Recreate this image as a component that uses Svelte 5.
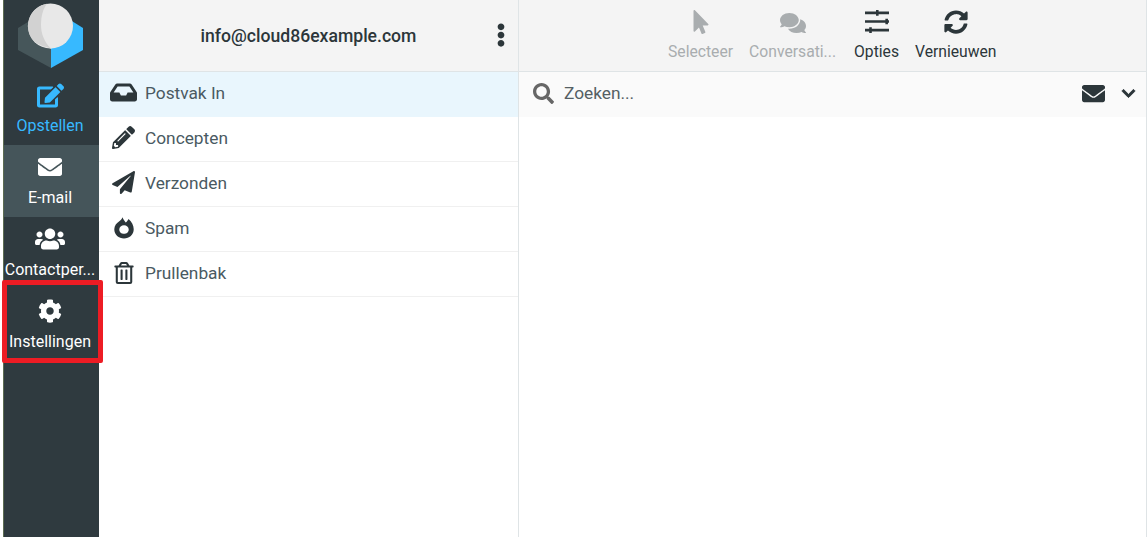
<script lang="ts">
    const icons: Record<string, { box: string; d: string }> = {
        edit: { box: "0 0 576 512", d: "M402.6 83.2l90.2 90.2c3.8 3.8 3.8 10 0 13.8L274.4 405.6l-92.8 10.3c-12.4 1.4-22.9-9.1-21.5-21.5l10.3-92.8L388.8 83.2c3.8-3.8 10-3.8 13.8 0zm162-22.9l-48.8-48.8c-15.2-15.2-39.9-15.2-55.2 0l-35.4 35.4c-3.8 3.8-3.8 10 0 13.8l90.2 90.2c3.8 3.8 10 3.8 13.8 0l35.4-35.4c15.2-15.3 15.2-40 0-55.2zM384 346.2V448H64V128h229.8c3.2 0 6.2-1.3 8.5-3.5l40-40c7.6-7.6 2.2-20.5-8.5-20.5H48C21.5 64 0 85.5 0 112v352c0 26.5 21.5 48 48 48h352c26.5 0 48-21.5 48-48V306.2c0-10.7-12.9-16-20.5-8.5l-40 40c-2.2 2.3-3.5 5.3-3.5 8.5z" },
        envelope: { box: "0 0 512 512", d: "M502.3 190.8c3.9-3.1 9.7-.2 9.7 4.7V400c0 26.5-21.5 48-48 48H48c-26.5 0-48-21.5-48-48V195.6c0-5 5.7-7.8 9.7-4.7 22.4 17.4 52.1 39.5 154.1 113.6 21.1 15.4 56.7 47.8 92.2 47.6 35.7.3 72-32.8 92.3-47.6 102-74.1 131.6-96.3 154-113.7zM256 320c23.2.4 56.6-29.2 73.4-41.4 132.7-96.3 142.8-104.7 173.4-128.7 5.8-4.5 9.2-11.5 9.2-18.9v-19c0-26.5-21.5-48-48-48H48C21.5 64 0 85.5 0 112v19c0 7.4 3.4 14.3 9.2 18.9 30.6 23.9 40.7 32.4 173.4 128.7 16.8 12.2 50.2 41.8 73.4 41.4z" },
        users: { box: "0 0 640 512", d: "M96 224c35.3 0 64-28.7 64-64s-28.7-64-64-64-64 28.7-64 64 28.7 64 64 64zm448 0c35.3 0 64-28.7 64-64s-28.7-64-64-64-64 28.7-64 64 28.7 64 64 64zm32 32h-64c-17.6 0-33.5 7.1-45.1 18.6 40.3 22.1 68.9 62 75.1 109.4h66c17.7 0 32-14.3 32-32v-32c0-35.3-28.7-64-64-64zm-256 0c61.9 0 112-50.1 112-112S381.9 32 320 32 208 82.1 208 144s50.1 112 112 112zm76.8 32h-8.3c-20.8 10-43.9 16-68.5 16s-47.6-6-68.5-16h-8.3C179.6 288 128 339.6 128 403.2V432c0 26.5 21.5 48 48 48h288c26.5 0 48-21.5 48-48v-28.8c0-63.6-51.6-115.2-115.2-115.2zm-223.7-13.4C161.5 263.1 145.6 256 128 256H64c-35.3 0-64 28.7-64 64v32c0 17.7 14.3 32 32 32h65.9c6.3-47.4 34.9-87.3 75.2-109.4z" },
        cog: { box: "0 0 512 512", d: "M487.4 315.7l-42.6-24.6c4.3-23.2 4.3-47 0-70.2l42.6-24.6c4.9-2.8 7.1-8.6 5.5-14-11.1-35.6-30-67.8-54.7-94.6-3.8-4.1-10-5.1-14.8-2.3L380.8 110c-17.9-15.4-38.5-27.3-60.8-35.1V25.8c0-5.6-3.9-10.5-9.4-11.7-36.7-8.2-74.3-7.8-109.2 0-5.5 1.2-9.4 6.1-9.4 11.7V75c-22.2 7.9-42.8 19.8-60.8 35.1L88.7 85.5c-4.9-2.8-11-1.9-14.8 2.3-24.7 26.7-43.6 58.9-54.7 94.6-1.7 5.4.6 11.2 5.5 14L67.3 221c-4.3 23.2-4.3 47 0 70.2l-42.6 24.6c-4.9 2.8-7.1 8.6-5.5 14 11.1 35.6 30 67.8 54.7 94.6 3.8 4.1 10 5.1 14.8 2.3l42.6-24.6c17.9 15.4 38.5 27.3 60.8 35.1v49.2c0 5.6 3.9 10.5 9.4 11.7 36.7 8.2 74.3 7.8 109.2 0 5.5-1.2 9.4-6.1 9.4-11.7v-49.2c22.2-7.9 42.8-19.8 60.8-35.1l42.6 24.6c4.9 2.8 11 1.9 14.8-2.3 24.7-26.7 43.6-58.9 54.7-94.6 1.5-5.5-.7-11.3-5.6-14.1zM256 336c-44.1 0-80-35.9-80-80s35.9-80 80-80 80 35.9 80 80-35.9 80-80 80z" },
        inbox: { box: "0 0 576 512", d: "M567.938 243.908L462.25 85.374A48.003 48.003 0 0 0 422.311 64H153.689a48 48 0 0 0-39.938 21.374L8.062 243.908A47.994 47.994 0 0 0 0 270.533V400c0 26.51 21.49 48 48 48h480c26.51 0 48-21.49 48-48V270.533a47.994 47.994 0 0 0-8.062-26.625zM162.252 128h251.497l85.333 128H376l-32 64H232l-32-64H76.918l85.334-128z" },
        pencil: { box: "0 0 512 512", d: "M497.9 142.1l-46.1 46.1c-4.7 4.7-12.3 4.7-17 0l-111-111c-4.7-4.7-4.7-12.3 0-17l46.1-46.1c18.7-18.7 49.1-18.7 67.9 0l60.1 60.1c18.8 18.7 18.8 49.1 0 67.9zM284.2 99.8L21.6 362.4.4 483.9c-2.9 16.4 11.4 30.6 27.8 27.8l121.5-21.3 262.6-262.6c4.7-4.7 4.7-12.3 0-17l-111-111c-4.8-4.7-12.4-4.7-17.1 0zM124.1 339.9c-5.5-5.5-5.5-14.3 0-19.8l154-154c5.5-5.5 14.3-5.5 19.8 0s5.5 14.3 0 19.8l-154 154c-5.5 5.5-14.3 5.5-19.8 0zM88 424h48v36.3l-64.5 11.3-31.1-31.1L51.7 376H88v48z" },
        plane: { box: "0 0 512 512", d: "M476 3.2L12.5 270.6c-18.1 10.4-15.8 35.6 2.2 43.2L121 358.4l287.3-253.2c5.5-4.9 13.3 2.6 8.6 8.3L176 407v80.5c0 23.6 28.5 32.9 42.5 15.8L282 426l124.6 52.2c14.2 6 30.4-2.9 33-18.2l72-432C515 7.8 493.3-6.8 476 3.2z" },
        fire: { box: "0 0 512 512", d: "M222 6C236 56 268 92 296 128C318 110 346 78 362 44C438 110 482 196 482 285C482 410 380 500 256 500C132 500 30 410 30 285C30 196 88 138 132 108C172 80 208 50 222 6ZM256 190C196 190 146 232 146 290C146 348 196 392 256 392C316 392 366 348 366 290C366 232 316 190 256 190Z" },
        trash: { box: "0 0 448 512", d: "M268 416h24a12 12 0 0 0 12-12V188a12 12 0 0 0-12-12h-24a12 12 0 0 0-12 12v216a12 12 0 0 0 12 12zM432 80h-82.4l-34-56.7A48 48 0 0 0 274.4 0H173.6a48 48 0 0 0-41.2 23.3L98.4 80H16A16 16 0 0 0 0 96v16a16 16 0 0 0 16 16h16v336a48 48 0 0 0 48 48h288a48 48 0 0 0 48-48V128h16a16 16 0 0 0 16-16V96a16 16 0 0 0-16-16zM171.8 50.9A6 6 0 0 1 177 48h94a6 6 0 0 1 5.2 2.9L293.6 80H154.4zM368 464H80V128h288zm-212-48h24a12 12 0 0 0 12-12V188a12 12 0 0 0-12-12h-24a12 12 0 0 0-12 12v216a12 12 0 0 0 12 12z" },
        pointer: { box: "0 0 320 512", d: "M302.189 329.126H196.105l55.831 135.993c3.889 9.428-.555 19.999-9.444 23.999l-49.165 21.427c-9.165 4-19.443-.571-23.332-9.714l-53.053-129.136-86.664 89.138C18.729 472.71 0 463.554 0 447.977V18.299C0 1.899 19.921-6.096 30.277 5.443l284.412 292.542c11.472 11.179 3.007 31.141-12.5 31.141z" },
        comments: { box: "0 0 576 512", d: "M416 192c0-88.4-93.1-160-208-160S0 103.6 0 192c0 34.3 14.1 65.9 38 92-13.4 30.2-35.5 54.2-35.8 54.5-2.2 2.3-2.8 5.7-1.5 8.7S4.8 352 8 352c36.6 0 66.9-12.3 88.7-25 32.2 15.7 70.3 25 111.3 25 114.9 0 208-71.6 208-160zm122 220c23.9-26 38-57.7 38-92 0-66.9-53.5-124.2-129.3-148.1.9 6.6 1.3 13.3 1.3 20.1 0 105.9-107.7 192-240 192-10.8 0-21.3-.8-31.7-1.9C207.8 439.6 281.8 480 368 480c41 0 79.1-9.2 111.3-25 21.8 12.7 52.1 25 88.7 25 3.2 0 6.1-1.9 7.3-4.8 1.3-2.9.7-6.3-1.5-8.7-.3-.3-22.4-24.2-35.8-54.5z" },
        sliders: { box: "0 0 512 512", d: "M0 34h235V0h55v34h222v54H290v34h-55V88H0zM0 218h435v-34h55v34h22v54h-22v34h-55v-34H0zM0 402h90v-34h55v34h367v54H145v34H90v-34H0z" },
        sync: { box: "0 0 512 512", d: "M370.72 133.28C339.458 104.008 298.888 87.962 255.848 88c-77.458.068-144.328 53.178-162.791 126.85-1.344 5.363-6.122 9.15-11.651 9.15H24.103c-7.498 0-13.194-6.807-11.807-14.176C33.933 94.924 134.813 8 256 8c66.448 0 126.791 26.136 171.315 68.685L463.03 40.97C478.149 25.851 504 36.559 504 57.941V192c0 13.255-10.745 24-24 24H345.941c-21.382 0-32.09-25.851-16.971-40.971l41.75-41.749zM32 296h134.059c21.382 0 32.09 25.851 16.971 40.971l-41.75 41.75c31.262 29.273 71.835 45.319 114.876 45.28 77.418-.07 144.315-53.144 162.787-126.849 1.344-5.363 6.122-9.15 11.651-9.15h57.304c7.498 0 13.194 6.807 11.807 14.176C478.067 417.076 377.187 504 256 504c-66.448 0-126.791-26.136-171.315-68.685L48.97 471.03C33.851 486.149 8 475.441 8 454.059V320c0-13.255 10.745-24 24-24z" },
        search: { box: "0 0 512 512", d: "M505 442.7L405.3 343c-4.5-4.5-10.6-7-17-7H372c27.6-35.3 44-79.7 44-128C416 93.1 322.9 0 208 0S0 93.1 0 208s93.1 208 208 208c48.3 0 92.7-16.4 128-44v16.3c0 6.4 2.5 12.5 7 17l99.7 99.7c9.4 9.4 24.6 9.4 33.9 0l28.3-28.3c9.4-9.4 9.4-24.6.1-34zM208 336c-70.7 0-128-57.2-128-128 0-70.7 57.2-128 128-128 70.7 0 128 57.2 128 128 0 70.7-57.2 128-128 128z" },
        chevron: { box: "0 0 448 512", d: "M207.029 381.476L12.686 187.132c-9.373-9.373-9.373-24.569 0-33.941l22.667-22.667c9.357-9.357 24.522-9.375 33.901-.04L224 284.505l154.745-154.021c9.379-9.335 24.544-9.317 33.901.04l22.667 22.667c9.373 9.373 9.373 24.569 0 33.941L240.971 381.476c-9.373 9.372-24.569 9.372-33.942 0z" },
        dots: { box: "0 0 192 512", d: "M96 184c39.8 0 72 32.2 72 72s-32.2 72-72 72-72-32.2-72-72 32.2-72 72-72zM24 80c0 39.8 32.2 72 72 72s72-32.2 72-72S135.8 8 96 8 24 40.2 24 80zm0 352c0 39.8 32.2 72 72 72s72-32.2 72-72-32.2-72-72-72-72 32.2-72 72z" },
    };

    const taskmenu = [
        { name: "Opstellen", icon: "edit", cls: "compose", size: 27 },
        { name: "E-mail", icon: "envelope", cls: "active", size: 24 },
        { name: "Contactper...", icon: "users", cls: "", size: 30 },
        { name: "Instellingen", icon: "cog", cls: "", size: 24 },
    ];

    const folders = [
        { name: "Postvak In", icon: "inbox", size: 27, selected: true },
        { name: "Concepten", icon: "pencil", size: 23 },
        { name: "Verzonden", icon: "plane", size: 23 },
        { name: "Spam", icon: "fire", size: 22 },
        { name: "Prullenbak", icon: "trash", size: 22 },
    ];

    const toolbar = [
        { name: "Selecteer", icon: "pointer", size: 24, disabled: true },
        { name: "Conversati...", icon: "comments", size: 26, disabled: true },
        { name: "Opties", icon: "sliders", size: 24 },
        { name: "Vernieuwen", icon: "sync", size: 24 },
    ];
</script>

{#snippet icon(name: string, size: number)}
    <svg class="icon" viewBox={icons[name].box} style="width:{size}px;height:{size}px" aria-hidden="true">
        <path d={icons[name].d} fill="currentColor" />
    </svg>
{/snippet}

<div class="app">
    <aside class="taskmenu">
        <div class="logo">
            <svg viewBox="15 0 70 72" width="70" height="72" aria-hidden="true">
                <path d="M18 28 L51 8 L51 68 L18 50 Z" fill="#46565a" />
                <path d="M83 28 L51 8 L51 68 L83 50 Z" fill="#37b9ff" />
                <circle cx="50.5" cy="26" r="22.5" fill="#e8e8e8" />
                <path d="M35 42.5 Q43 47 51 48.5 Q59 47 66 42.5 L60 30 L40 30 Z" fill="#e8e8e8" />
                <path d="M47 3.8 A22.5 22.5 0 0 0 35 42.5 Q43 47 51 48.5 C44 42 41 33 41 25 C41 16 43 9 47 3.8 Z" fill="#d2d2d2" />
            </svg>
        </div>
        {#each taskmenu as item}
            <div class="task {item.cls}">
                <span class="task-icon">{@render icon(item.icon, item.size)}</span>
                <span class="task-label">{item.name}</span>
            </div>
        {/each}
    </aside>

    <section class="folders">
        <header class="account">
            <span class="email">info@cloud86example.com</span>
            <span class="more">{@render icon("dots", 24)}</span>
        </header>
        <ul>
            {#each folders as folder}
                <li class:selected={folder.selected}>
                    <span class="folder-icon">{@render icon(folder.icon, folder.size)}</span>
                    <span>{folder.name}</span>
                </li>
            {/each}
        </ul>
    </section>

    <section class="messages">
        <header class="toolbar">
            {#each toolbar as btn}
                <div class="tool" class:disabled={btn.disabled}>
                    <span class="tool-icon">{@render icon(btn.icon, btn.size)}</span>
                    <span class="tool-label">{btn.name}</span>
                </div>
            {/each}
        </header>
        <div class="search">
            <span class="search-icon">{@render icon("search", 21)}</span>
            <span class="placeholder">Zoeken...</span>
            <span class="filter">{@render icon("envelope", 23)}</span>
            <span class="caret">{@render icon("chevron", 15)}</span>
        </div>
    </section>

    <div class="highlight"></div>
</div>

<style>
    :global(body) {
        margin: 0;
        background: #fff;
    }

    .app {
        position: relative;
        display: flex;
        width: 1148px;
        height: 537px;
        padding-left: 3px;
        padding-right: 1px;
        box-sizing: border-box;
        overflow: hidden;
        background: #fff;
        font-family: Roboto, "Liberation Sans", sans-serif;
        color: #2c363a;
    }

    .icon {
        display: block;
    }

    .taskmenu {
        width: 96px;
        flex: none;
        box-sizing: border-box;
        padding-right: 3px;
        border-left: 1px solid #5c6c52;
        background: #2f3a3f;
        color: #fff;
    }

    .logo {
        height: 73px;
        display: flex;
        justify-content: center;
        align-items: flex-start;
        box-sizing: border-box;
    }

    .task {
        height: 72px;
        margin-right: -3px;
        padding-right: 3px;
        box-sizing: border-box;
        display: flex;
        flex-direction: column;
        align-items: center;
        font-size: 16px;
        white-space: nowrap;
    }

    .task-icon {
        height: 34px;
        display: flex;
        align-items: center;
        justify-content: center;
        margin-top: 5px;
    }

    .task-label {
        line-height: 18px;
        margin-top: 4.5px;
    }

    .compose {
        color: #37b9ff;
    }

    .active {
        background: #45555a;
    }

    .folders {
        width: 419px;
        flex: none;
        border-right: 1px solid #dfe4e6;
    }

    .account {
        height: 72px;
        box-sizing: border-box;
        display: flex;
        align-items: center;
        position: relative;
        background: #f4f4f4;
        border-bottom: 1px solid #dfe4e6;
    }

    .email {
        width: 100%;
        text-align: center;
        font-size: 17.6px;
        font-weight: 500;
        box-sizing: border-box;
    }

    .more {
        position: absolute;
        right: 5px;
        top: 23px;
    }

    ul {
        list-style: none;
        margin: 0;
        padding: 0;
    }

    li {
        height: 45px;
        box-sizing: border-box;
        display: flex;
        align-items: center;
        padding-left: 11px;
        padding-bottom: 3px;
        border-bottom: 1px solid #f0f0f0;
        font-size: 17.3px;
        color: #4a5a62;
    }

    li.selected {
        background: #e9f6fd;
        border-bottom-color: #e9f6fd;
    }

    .folder-icon {
        width: 27px;
        margin-right: 8px;
        display: flex;
        justify-content: center;
        color: #2c363a;
    }

    .messages {
        flex: 1;
        min-width: 0;
        border-right: 1px solid #dfe4e6;
    }

    .toolbar {
        height: 72px;
        box-sizing: border-box;
        display: flex;
        gap: 16px;
        padding-left: 149px;
        background: #f4f4f4;
        border-bottom: 1px solid #dfe4e6;
    }

    .tool {
        display: flex;
        flex-direction: column;
        align-items: center;
        font-size: 15.7px;
        white-space: nowrap;
        color: #2c363a;
    }

    .tool:nth-child(2) {
        margin-right: 2px;
    }

    .tool.disabled {
        color: #a9adaf;
    }

    .tool-icon {
        height: 24px;
        margin-top: 10px;
        margin-bottom: 9px;
    }

    .tool-label {
        line-height: 18px;
    }

    .search {
        height: 45px;
        box-sizing: border-box;
        display: flex;
        align-items: center;
        padding-left: 14px;
        padding-bottom: 3px;
        background: #fafafa;
    }

    .search-icon {
        color: #666;
        margin-right: 10px;
    }

    .placeholder {
        flex: 1;
        font-size: 17.3px;
        color: #555f64;
    }

    .caret {
        margin-left: 16px;
        margin-right: 10px;
    }

    .caret path {
        stroke: currentColor;
        stroke-width: 30;
    }

    .highlight {
        position: absolute;
        left: 2px;
        top: 280px;
        width: 101px;
        height: 83px;
        box-sizing: border-box;
        border: 5px solid #ed1c24;
        border-radius: 2px;
    }
</style>
